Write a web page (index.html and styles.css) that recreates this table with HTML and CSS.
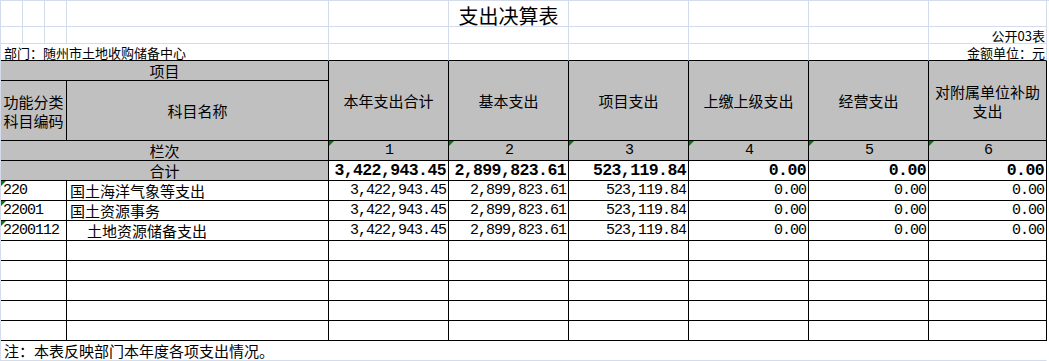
FILE: index.html
```html
<!DOCTYPE html>
<html lang="zh-CN">
<head>
<meta charset="utf-8">
<title>支出决算表</title>
<link rel="stylesheet" href="styles.css">
</head>
<body>
<div class="sheet">
  <!-- row 1: title -->
  <div class="g"></div><div class="g"></div><div class="g"></div><div class="g"></div><div class="g"></div>
  <div class="g title">支出决算表</div>
  <div class="g"></div><div class="g"></div><div class="g"></div><div class="g"></div>
  <!-- row 2 -->
  <div class="g"></div><div class="g"></div><div class="g"></div><div class="g"></div><div class="g"></div>
  <div class="g"></div><div class="g"></div><div class="g"></div><div class="g"></div>
  <div class="g small right">公开03表</div>
  <!-- row 3 -->
  <div class="g gb c4 small left">部门：随州市土地收购储备中心</div>
  <div class="g gb"></div><div class="g gb"></div><div class="g gb"></div><div class="g gb"></div><div class="g gb"></div>
  <div class="g gb small right">金额单位：元</div>

  <!-- header -->
  <div class="h c4 center">项目</div>
  <div class="h r2 center">本年支出合计</div>
  <div class="h r2 center">基本支出</div>
  <div class="h r2 center">项目支出</div>
  <div class="h r2 center">上缴上级支出</div>
  <div class="h r2 center">经营支出</div>
  <div class="h r2 center two">对附属单位补助<br>支出</div>
  <div class="h c3 center two">功能分类<br>科目编码</div>
  <div class="h center">科目名称</div>

  <div class="h c4 center">栏次</div>
  <div class="h center num tri">1</div>
  <div class="h center num tri">2</div>
  <div class="h center num tri">3</div>
  <div class="h center num tri">4</div>
  <div class="h center num tri">5</div>
  <div class="h center num tri">6</div>

  <div class="h c4 center">合计</div>
  <div class="d right bnum">3,422,943.45</div>
  <div class="d right bnum">2,899,823.61</div>
  <div class="d right bnum">523,119.84</div>
  <div class="d right bnum">0.00</div>
  <div class="d right bnum">0.00</div>
  <div class="d right bnum">0.00</div>

  <!-- data rows -->
  <div class="d c3 code tri">220</div>
  <div class="d name">国土海洋气象等支出</div>
  <div class="d right num">3,422,943.45</div>
  <div class="d right num">2,899,823.61</div>
  <div class="d right num">523,119.84</div>
  <div class="d right num">0.00</div>
  <div class="d right num">0.00</div>
  <div class="d right num">0.00</div>

  <div class="d c3 code tri">22001</div>
  <div class="d name">国土资源事务</div>
  <div class="d right num">3,422,943.45</div>
  <div class="d right num">2,899,823.61</div>
  <div class="d right num">523,119.84</div>
  <div class="d right num">0.00</div>
  <div class="d right num">0.00</div>
  <div class="d right num">0.00</div>

  <div class="d c3 code tri">2200112</div>
  <div class="d name sub">土地资源储备支出</div>
  <div class="d right num">3,422,943.45</div>
  <div class="d right num">2,899,823.61</div>
  <div class="d right num">523,119.84</div>
  <div class="d right num">0.00</div>
  <div class="d right num">0.00</div>
  <div class="d right num">0.00</div>

  <div class="d c3"></div><div class="d"></div><div class="d"></div><div class="d"></div><div class="d"></div><div class="d"></div><div class="d"></div><div class="d"></div>
  <div class="d c3"></div><div class="d"></div><div class="d"></div><div class="d"></div><div class="d"></div><div class="d"></div><div class="d"></div><div class="d"></div>
  <div class="d c3"></div><div class="d"></div><div class="d"></div><div class="d"></div><div class="d"></div><div class="d"></div><div class="d"></div><div class="d"></div>
  <div class="d c3"></div><div class="d"></div><div class="d"></div><div class="d"></div><div class="d"></div><div class="d"></div><div class="d"></div><div class="d"></div>
  <div class="d c3"></div><div class="d"></div><div class="d"></div><div class="d"></div><div class="d"></div><div class="d"></div><div class="d"></div><div class="d"></div>

  <!-- footer -->
  <div class="g foot c10 left">注：本表反映部门本年度各项支出情况。</div>
</div>
</body>
</html>
```

FILE: styles.css
```css
* {
  box-sizing: border-box;
  margin: 0;
  padding: 0;
}

body {
  margin: 0;
  background: #ffffff;
  color: #000000;
  font-family: "Noto Sans CJK SC", "Liberation Sans", sans-serif;
}

.sheet {
  display: grid;
  grid-template-columns: 22px 22px 22px 262px 120px 120px 120px 120px 120px 118px;
  grid-template-rows: 26px 17px 17px 20px 60px 20px 20px repeat(8, 20px) 20px;
  width: 1049px;
  border-left: 1px solid #d4dbea;
  border-top: 1px solid #d4dbea;
}

.sheet > div {
  display: flex;
  align-items: center;
  white-space: nowrap;
  font-size: 15px;
  line-height: 18px;
  border-right: 1px solid #000;
  border-bottom: 1px solid #000;
  position: relative;
}

/* light spreadsheet gridline cells */
.sheet > .g {
  border-right-color: #d4dbea;
  border-bottom-color: #d4dbea;
}
.sheet > .gb {
  border-bottom-color: #000;
}

.c3 { grid-column: span 3; }
.c4 { grid-column: span 4; }
.c10 { grid-column: span 10; }
.r2 { grid-row: span 2; }

.h {
  background: #c0c0c0;
}
.d {
  background: #ffffff;
}

.center {
  justify-content: center;
  text-align: center;
}
.right {
  justify-content: flex-end;
  padding-right: 2px;
}
.left {
  justify-content: flex-start;
  padding-left: 3px;
}

.title {
  font-size: 20px !important;
  line-height: 22px !important;
  justify-content: center;
  padding-top: 4px;
}

.small {
  font-size: 13px !important;
  line-height: 15px !important;
}
.sheet > .small.right {
  padding-right: 1px;
}

.two {
  line-height: 19px !important;
}

.num {
  font-family: "Liberation Mono", monospace;
  font-size: 15px !important;
  letter-spacing: -1px;
}
.sheet > .num.right {
  padding-right: 2px;
}
.sheet > .num.center {
  padding-left: 1px;
}

.bnum {
  font-family: "Liberation Mono", monospace;
  font-size: 16.5px !important;
  letter-spacing: -0.6px;
  font-weight: bold;
}

.code {
  font-family: "Liberation Mono", monospace;
  font-size: 15px !important;
  letter-spacing: -1px;
  padding-left: 2px;
}

.name {
  padding-left: 3px;
}
.name.sub {
  padding-left: 20px;
}

.foot {
  border-right-color: transparent !important;
  padding-left: 3px;
}

.tri::before {
  content: "";
  position: absolute;
  left: 0;
  top: 0;
  width: 0;
  height: 0;
  border-top: 5px solid #008000;
  border-right: 5px solid transparent;
}
```
